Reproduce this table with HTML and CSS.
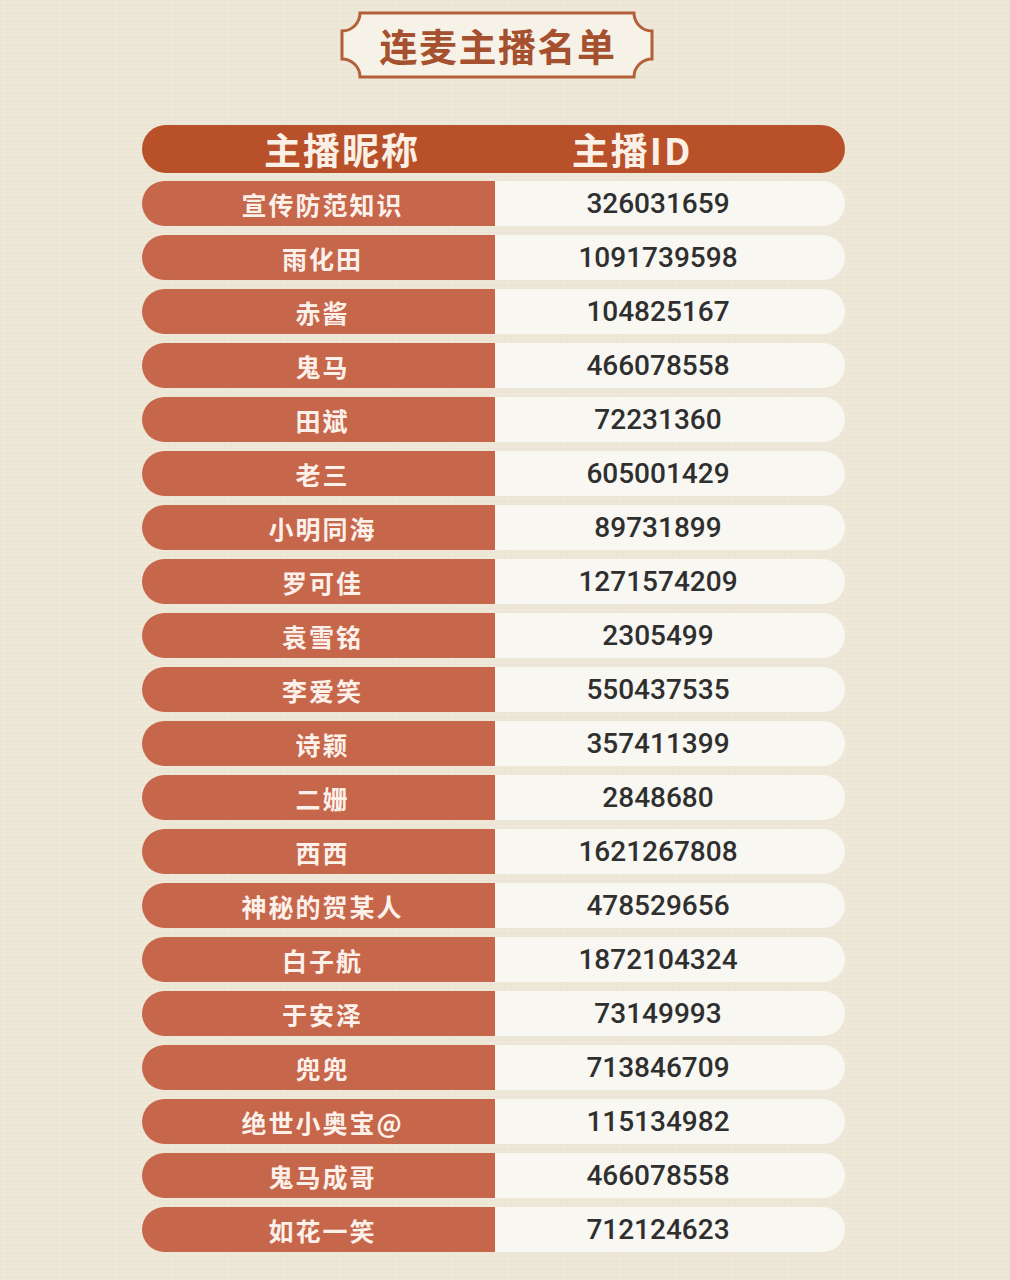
FILE: index.html
```html
<!DOCTYPE html>
<html lang="zh">
<head>
<meta charset="utf-8">
<title>连麦主播名单</title>
<link rel="stylesheet" href="styles.css">
</head>
<body>
<div class="page">
  <div class="title-wrap">
    <svg class="title-frame" width="314" height="68" viewBox="0 0 314 68" aria-hidden="true">
      <path d="M20 2 H294 A18 18 0 0 0 312 20 V48 A18 18 0 0 0 294 66 H20 A18 18 0 0 0 2 48 V20 A18 18 0 0 0 20 2 Z" fill="#f7f2e8" stroke="#b3603a" stroke-width="3"/>
    </svg>
    <h1 class="title">连麦主播名单</h1>
  </div>

  <div class="table">
    <div class="thead">
      <span class="th th-name">主播昵称</span>
      <span class="th th-id">主播ID</span>
    </div>
    <div class="row"><span class="name">宣传防范知识</span><span class="id">326031659</span></div>
    <div class="row"><span class="name">雨化田</span><span class="id">1091739598</span></div>
    <div class="row"><span class="name">赤酱</span><span class="id">104825167</span></div>
    <div class="row"><span class="name">鬼马</span><span class="id">466078558</span></div>
    <div class="row"><span class="name">田斌</span><span class="id">72231360</span></div>
    <div class="row"><span class="name">老三</span><span class="id">605001429</span></div>
    <div class="row"><span class="name">小明同海</span><span class="id">89731899</span></div>
    <div class="row"><span class="name">罗可佳</span><span class="id">1271574209</span></div>
    <div class="row"><span class="name">袁雪铭</span><span class="id">2305499</span></div>
    <div class="row"><span class="name">李爱笑</span><span class="id">550437535</span></div>
    <div class="row"><span class="name">诗颖</span><span class="id">357411399</span></div>
    <div class="row"><span class="name">二姗</span><span class="id">2848680</span></div>
    <div class="row"><span class="name">西西</span><span class="id">1621267808</span></div>
    <div class="row"><span class="name">神秘的贺某人</span><span class="id">478529656</span></div>
    <div class="row"><span class="name">白子航</span><span class="id">1872104324</span></div>
    <div class="row"><span class="name">于安泽</span><span class="id">73149993</span></div>
    <div class="row"><span class="name">兜兜</span><span class="id">713846709</span></div>
    <div class="row"><span class="name">绝世小奥宝@</span><span class="id">115134982</span></div>
    <div class="row"><span class="name">鬼马成哥</span><span class="id">466078558</span></div>
    <div class="row"><span class="name">如花一笑</span><span class="id">712124623</span></div>
  </div>
</div>
</body>
</html>
```

FILE: styles.css
```css
html, body {
  margin: 0;
  padding: 0;
}

body {
  width: 1010px;
  height: 1280px;
  overflow: hidden;
  background-color: #eee8d9;
  background-image:
    repeating-linear-gradient(180deg, rgba(120, 100, 70, 0.025) 0 1px, transparent 1px 4px),
    repeating-linear-gradient(90deg, rgba(120, 100, 70, 0.015) 0 1px, transparent 1px 7px);
  font-family: "Noto Sans CJK SC", "Noto Sans", sans-serif;
}

.page {
  padding-top: 11px;
}

.title-wrap {
  position: relative;
  width: 314px;
  height: 68px;
  margin-left: 340px;
}

.title-frame {
  position: absolute;
  left: 0;
  top: 0;
}

.title {
  position: relative;
  margin: 0;
  height: 68px;
  display: flex;
  align-items: center;
  justify-content: center;
  padding-left: 2px;
  font-size: 38px;
  font-weight: 700;
  letter-spacing: 1.5px;
  color: #a5502e;
  line-height: 1;
}

.table {
  margin-top: 46px;
  margin-left: 142px;
  width: 703px;
  display: flex;
  flex-direction: column;
  gap: 9px;
}

.thead {
  height: 48px;
  border-radius: 24px;
  background: #b8502a;
  display: flex;
  align-items: center;
  margin-bottom: -1px;
}

.th {
  color: #fbf0e6;
  font-size: 37px;
  font-weight: 700;
  letter-spacing: 2px;
  line-height: 1;
  text-align: center;
}

.th-name {
  width: 400px;
}

.th-id {
  width: 180px;
}

.row {
  height: 45px;
  display: grid;
  grid-template-columns: 353px 350px;
}

.name {
  background: #c6664a;
  border-radius: 22.5px 0 0 22.5px;
  color: #fcf1ea;
  font-size: 25px;
  font-weight: 700;
  letter-spacing: 2px;
  display: flex;
  align-items: center;
  justify-content: center;
  padding-left: 8px;
}

.id {
  background: #f9f7f2;
  border-radius: 0 22.5px 22.5px 0;
  color: #2f2f2f;
  font-family: Roboto, "Noto Sans", sans-serif;
  font-size: 28px;
  font-weight: 500;
  display: flex;
  align-items: center;
  justify-content: center;
  padding-right: 24px;
}
```
